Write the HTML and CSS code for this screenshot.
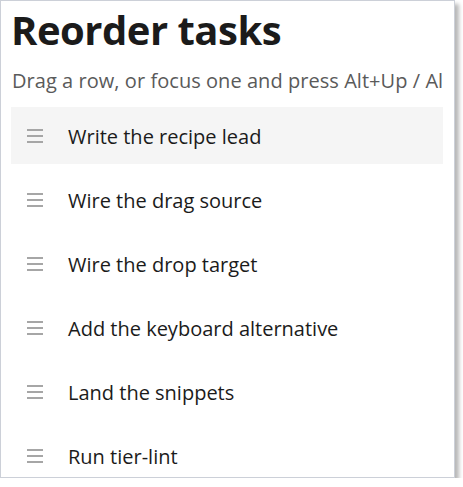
FILE: index.html
```html
<!DOCTYPE html>
<html>
<head>
<meta charset="utf-8">
<link rel="stylesheet" href="styles.css">
</head>
<body>
<div class="frame">
  <div class="panel">
    <h1 class="title">Reorder tasks</h1>
    <p class="hint">Drag a row, or focus one and press Alt+Up / Alt+Down to move it.</p>
    <ul class="list">
      <li class="row active"><svg class="grip" width="16" height="14" viewBox="0 0 16 14"><path d="M0 1h16M0 7h16M0 13h16"/></svg><span>Write the recipe lead</span></li>
      <li class="row"><svg class="grip" width="16" height="14" viewBox="0 0 16 14"><path d="M0 1h16M0 7h16M0 13h16"/></svg><span>Wire the drag source</span></li>
      <li class="row"><svg class="grip" width="16" height="14" viewBox="0 0 16 14"><path d="M0 1h16M0 7h16M0 13h16"/></svg><span>Wire the drop target</span></li>
      <li class="row"><svg class="grip" width="16" height="14" viewBox="0 0 16 14"><path d="M0 1h16M0 7h16M0 13h16"/></svg><span>Add the keyboard alternative</span></li>
      <li class="row"><svg class="grip" width="16" height="14" viewBox="0 0 16 14"><path d="M0 1h16M0 7h16M0 13h16"/></svg><span>Land the snippets</span></li>
      <li class="row"><svg class="grip" width="16" height="14" viewBox="0 0 16 14"><path d="M0 1h16M0 7h16M0 13h16"/></svg><span>Run tier-lint</span></li>
    </ul>
  </div>
</div>
</body>
</html>
```
FILE: styles.css
```css
html, body {
  margin: 0;
  padding: 0;
  background: #ffffff;
}
body {
  font-family: "Open Sans", "Noto Sans", sans-serif;
  color: #1b1b1b;
}
.frame {
  width: 453px;
  height: 476px;
  border: 1px solid #ccd0d8;
  box-shadow: 4px 4px 4px rgba(0, 0, 0, 0.28);
  background: #fff;
  overflow: hidden;
}
.panel {
  margin-left: 10px;
  width: 432px;
  overflow: hidden;
}
.title {
  margin: 0;
  padding-top: 4px;
  font-size: 40px;
  line-height: 50px;
  font-weight: 700;
  letter-spacing: -0.5px;
  white-space: nowrap;
}
.hint {
  margin: 13px 0 0 1px;
  font-size: 20px;
  line-height: 26px;
  letter-spacing: 0.05px;
  color: #5a5a5a;
  white-space: nowrap;
}
.list {
  list-style: none;
  margin: 13px 0 0 0;
  padding: 0;
  display: flex;
  flex-direction: column;
  gap: 7px;
}
.row {
  height: 57px;
  display: flex;
  align-items: center;
  padding-left: 16px;
  font-size: 20px;
  white-space: nowrap;
}
.row span {
  padding-top: 1px;
}
.row.active {
  background: #f5f5f5;
}
.grip {
  flex: none;
  margin-right: 25px;
  stroke: #a6a6a6;
  stroke-width: 2;
}
```
